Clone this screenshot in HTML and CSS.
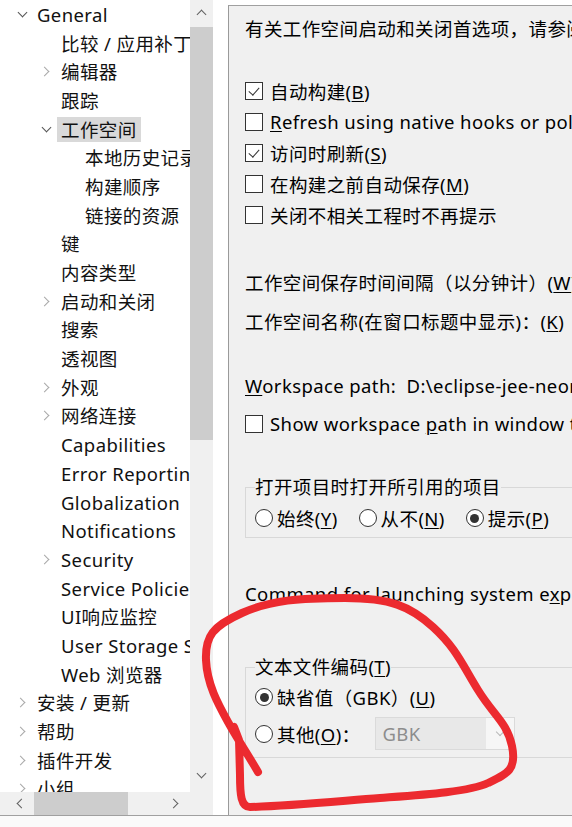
FILE: index.html
```html
<!DOCTYPE html>
<html lang="zh-CN">
<head>
  <meta charset="UTF-8" />
  <meta name="viewport" content="width=device-width, initial-scale=1.0" />
  <title>首选项 - 工作空间</title>
  <link rel="stylesheet" href="styles.css">
</head>
<body>
  <div class="window">
    <!-- 左侧首选项树 -->
    <div class="tree-pane">
      <ul class="tree">
        <li class="row lv0 open"><span class="tw"></span><span class="label">General</span></li>
        <li class="row lv1"><span class="tw"></span><span class="label">比较 / 应用补丁</span></li>
        <li class="row lv1 closed"><span class="tw"></span><span class="label">编辑器</span></li>
        <li class="row lv1"><span class="tw"></span><span class="label">跟踪</span></li>
        <li class="row lv1 open"><span class="tw"></span><span class="label selected">工作空间</span></li>
        <li class="row lv2"><span class="tw"></span><span class="label">本地历史记录</span></li>
        <li class="row lv2"><span class="tw"></span><span class="label">构建顺序</span></li>
        <li class="row lv2"><span class="tw"></span><span class="label">链接的资源</span></li>
        <li class="row lv1"><span class="tw"></span><span class="label">键</span></li>
        <li class="row lv1"><span class="tw"></span><span class="label">内容类型</span></li>
        <li class="row lv1 closed"><span class="tw"></span><span class="label">启动和关闭</span></li>
        <li class="row lv1"><span class="tw"></span><span class="label">搜索</span></li>
        <li class="row lv1"><span class="tw"></span><span class="label">透视图</span></li>
        <li class="row lv1 closed"><span class="tw"></span><span class="label">外观</span></li>
        <li class="row lv1 closed"><span class="tw"></span><span class="label">网络连接</span></li>
        <li class="row lv1"><span class="tw"></span><span class="label">Capabilities</span></li>
        <li class="row lv1"><span class="tw"></span><span class="label">Error Reporting</span></li>
        <li class="row lv1"><span class="tw"></span><span class="label">Globalization</span></li>
        <li class="row lv1"><span class="tw"></span><span class="label">Notifications</span></li>
        <li class="row lv1 closed"><span class="tw"></span><span class="label">Security</span></li>
        <li class="row lv1"><span class="tw"></span><span class="label">Service Policies</span></li>
        <li class="row lv1"><span class="tw"></span><span class="label">UI响应监控</span></li>
        <li class="row lv1"><span class="tw"></span><span class="label">User Storage Service</span></li>
        <li class="row lv1"><span class="tw"></span><span class="label">Web 浏览器</span></li>
        <li class="row lv0 closed"><span class="tw"></span><span class="label">安装 / 更新</span></li>
        <li class="row lv0 closed"><span class="tw"></span><span class="label">帮助</span></li>
        <li class="row lv0 closed"><span class="tw"></span><span class="label">插件开发</span></li>
        <li class="row lv0 closed"><span class="tw"></span><span class="label">小组</span></li>
      </ul>

      <div class="vscroll">
        <div class="sb-btn up"><span class="chev chev-up"></span></div>
        <div class="thumb-v"></div>
        <div class="sb-btn down"><span class="chev chev-down"></span></div>
      </div>
      <div class="hscroll">
        <div class="sb-btn left"><span class="chev chev-left"></span></div>
        <div class="thumb-h"></div>
        <div class="sb-btn right"><span class="chev chev-right"></span></div>
      </div>
      <div class="corner"></div>
    </div>

    <div class="gutter"></div>

    <!-- 右侧：工作空间设置 -->
    <div class="prefs">
      <div class="intro">有关工作空间启动和关闭首选项，请参阅“启动和关闭”首选项页面。</div>

      <div class="checks">
        <div class="check"><span class="box on"></span><span>自动构建(<u>B</u>)</span></div>
        <div class="check"><span class="box"></span><span><u>R</u>efresh using native hooks or polling</span></div>
        <div class="check"><span class="box on"></span><span>访问时刷新(<u>S</u>)</span></div>
        <div class="check"><span class="box"></span><span>在构建之前自动保存(<u>M</u>)</span></div>
        <div class="check"><span class="box"></span><span>关闭不相关工程时不再提示</span></div>
      </div>

      <div class="field save">工作空间保存时间间隔（以分钟计）(<u>W</u>)：</div>
      <div class="field">工作空间名称(在窗口标题中显示)：(<u>K</u>)</div>

      <div class="path"><u>W</u>orkspace path:&nbsp; D:\eclipse-jee-neon-3-win32-x86_64\workspace</div>
      <div class="check show"><span class="box"></span><span>Show workspace <u>p</u>ath in window title</span></div>

      <fieldset class="group open-refs">
        <legend>打开项目时打开所引用的项目</legend>
        <div class="radios">
          <span class="radio"><span class="dot"></span><span>始终(<u>Y</u>)</span></span>
          <span class="radio"><span class="dot"></span><span>从不(<u>N</u>)</span></span>
          <span class="radio"><span class="dot on"></span><span>提示(<u>P</u>)</span></span>
        </div>
      </fieldset>

      <div class="command">Command for launching system e<u>x</u>plorer:</div>

      <fieldset class="group encoding">
        <legend>文本文件编码(<u>T</u>)</legend>
        <div class="radio-row first"><span class="radio"><span class="dot on"></span><span>缺省值（GBK）(<u>U</u>)</span></span></div>
        <div class="radio-row">
          <span class="radio"><span class="dot"></span><span>其他(<u>O</u>)：</span></span>
          <div class="combo disabled"><span class="combo-text">GBK</span><span class="combo-btn"><span class="chev chev-down"></span></span></div>
        </div>
      </fieldset>
    </div>
  </div>
  <div class="statusline"></div>

  <!-- 红色手绘圈注 -->
  <svg class="scribble" viewBox="0 0 572 827" width="572" height="827">
    <path d="M258 772 C250 758 238 740 228 722 S207 684 206 660 S213 626 242 613 S300 598 345 598 S410 606 433 627 S462 664 478 690 S507 722 512 746 S507 774 488 783 S420 795 380 798 S290 806 250 807 C241 807 240 795 240 775 L239 740 L234 727" />
  </svg>
</body>
</html>
```

FILE: styles.css
```css
* {
  box-sizing: border-box;
}

body {
  margin: 0;
  width: 572px;
  height: 827px;
  overflow: hidden;
  position: relative;
  background: #fff;
  font-family: "Noto Sans", "Noto Sans CJK SC", sans-serif;
  font-size: 18.5px;
  letter-spacing: 0.4px;
  color: #111;
}

u {
  text-decoration: underline;
  text-underline-offset: 2px;
  text-decoration-thickness: 1px;
}

.window {
  display: flex;
  height: 815px;
}

/* ---------- tree ---------- */

.tree-pane {
  width: 213px;
  flex: none;
  display: grid;
  grid-template-columns: 190px 23px;
  grid-template-rows: 792px 23px;
  background: #fff;
}

.tree {
  list-style: none;
  margin: 0;
  padding: 0;
  overflow: hidden;
}

.row {
  height: 28.7px;
  display: flex;
  align-items: center;
  white-space: nowrap;
}

.lv0 { padding-left: 14px; }
.lv1 { padding-left: 38px; }
.lv2 { padding-left: 62px; }

.tw {
  width: 16px;
  height: 16px;
  flex: none;
  margin-right: 7px;
  display: flex;
  align-items: center;
  justify-content: center;
}

.open > .tw::before,
.closed > .tw::before {
  content: "";
  width: 6px;
  height: 6px;
  border-right: 1.4px solid #555;
  border-bottom: 1.4px solid #555;
}

.open > .tw::before {
  transform: translateY(-2px) rotate(45deg);
}

.closed > .tw::before {
  border-color: #a8a8a8;
  transform: translateX(-2px) rotate(-45deg);
}

.label {
  line-height: 25px;
}

.label.selected {
  background: #d9d9d9;
  padding: 0 4px;
  margin-left: -4px;
}

/* ---------- scrollbars ---------- */

.vscroll {
  background: #f0f0f0;
  display: flex;
  flex-direction: column;
}

.hscroll {
  background: #f0f0f0;
  display: flex;
  align-items: stretch;
}

.corner {
  background: #f0f0f0;
}

.sb-btn {
  display: flex;
  align-items: center;
  justify-content: center;
  flex: none;
}

.sb-btn.up { height: 25px; }
.sb-btn.down { height: 34px; margin-top: auto; }
.sb-btn.left { width: 34px; padding-left: 4px; }
.sb-btn.right { width: 30px; margin-left: auto; }

.thumb-v {
  margin-top: 2px;
  height: 413px;
  background: #cdcdcd;
}

.thumb-h {
  width: 94px;
  background: #cdcdcd;
}

.chev {
  width: 7px;
  height: 7px;
  border-right: 1.6px solid #606060;
  border-bottom: 1.6px solid #606060;
}

.chev-up { transform: translateY(2px) rotate(-135deg); }
.chev-down { transform: translateY(-2px) rotate(45deg); }
.chev-left { transform: translateX(2px) rotate(135deg); }
.chev-right { transform: translateX(-2px) rotate(-45deg); }

.gutter {
  width: 15px;
  flex: none;
  background: #fff;
}

/* ---------- workspace page ---------- */

.prefs {
  flex: 1;
  margin-top: 5px;
  border-top: 1px solid #a0a0a0;
  border-left: 1px solid #9a9a9a;
  background: #f0f0f0;
  padding-left: 16px;
  overflow: hidden;
  white-space: nowrap;
  color: #000;
}

.intro {
  margin-top: 11px;
  height: 24px;
  line-height: 24px;
}

.checks {
  margin-top: 34px;
}

.check {
  height: 31px;
  display: flex;
  align-items: center;
  gap: 7px;
}

.box {
  width: 18px;
  height: 18px;
  flex: none;
  border: 1px solid #333;
  background: #fff;
  position: relative;
}

.box.on::after {
  content: "";
  position: absolute;
  left: 5px;
  top: 2px;
  width: 5px;
  height: 9px;
  border-right: 1.2px solid #333;
  border-bottom: 1.2px solid #333;
  transform: rotate(42deg);
}

.field {
  height: 39px;
  line-height: 39px;
}

.field.save {
  margin-top: 33px;
}

.path {
  margin-top: 29px;
  height: 32px;
  line-height: 32px;
}

.check.show {
  margin-top: 6px;
}

.group {
  margin: 0;
  width: 440px;
  min-width: 440px;
  padding: 0 0 4px 9px;
  border: 1px solid #d8d8d8;
}

.group legend {
  padding: 0;
  line-height: 24px;
}

.open-refs {
  margin-top: 36px;
}

.radios {
  margin-top: 4px;
  height: 30px;
  display: flex;
  align-items: center;
  gap: 21px;
}

.radio {
  display: inline-flex;
  align-items: center;
  gap: 4px;
}

.dot {
  width: 18px;
  height: 18px;
  flex: none;
  border: 1px solid #333;
  border-radius: 50%;
  background: #fff;
  display: flex;
  align-items: center;
  justify-content: center;
}

.dot.on::after {
  content: "";
  width: 9px;
  height: 9px;
  border-radius: 50%;
  background: #333;
}

.command {
  margin-top: 44px;
  height: 24px;
  line-height: 24px;
}

.encoding {
  margin-top: 49px;
  padding-bottom: 7px;
}

.radio-row {
  display: flex;
  align-items: center;
  height: 33px;
  margin-top: 5px;
}

.radio-row.first {
  height: 30px;
  margin-top: 3px;
}

.combo {
  margin-left: 15px;
  width: 140px;
  height: 33px;
  display: flex;
  border: 1px solid #dadada;
  background: #f6f6f6;
}

.combo-text {
  width: 110px;
  background: #e8e8e8;
  color: #8d8d8d;
  padding-left: 6px;
  line-height: 31px;
}

.combo-btn {
  flex: 1;
  display: flex;
  align-items: center;
  justify-content: center;
}

.combo-btn .chev {
  border-color: #b8b8b8;
  width: 6px;
  height: 6px;
  border-width: 1.2px;
}

.statusline {
  height: 12px;
  border-top: 1px solid #a0a0a0;
  background: #fafafa;
}

/* ---------- red annotation ---------- */

.scribble {
  position: absolute;
  top: 0;
  left: 0;
  pointer-events: none;
}

.scribble path {
  fill: none;
  stroke: #ec2a2f;
  stroke-width: 8;
  stroke-linecap: round;
  stroke-linejoin: round;
}
```
